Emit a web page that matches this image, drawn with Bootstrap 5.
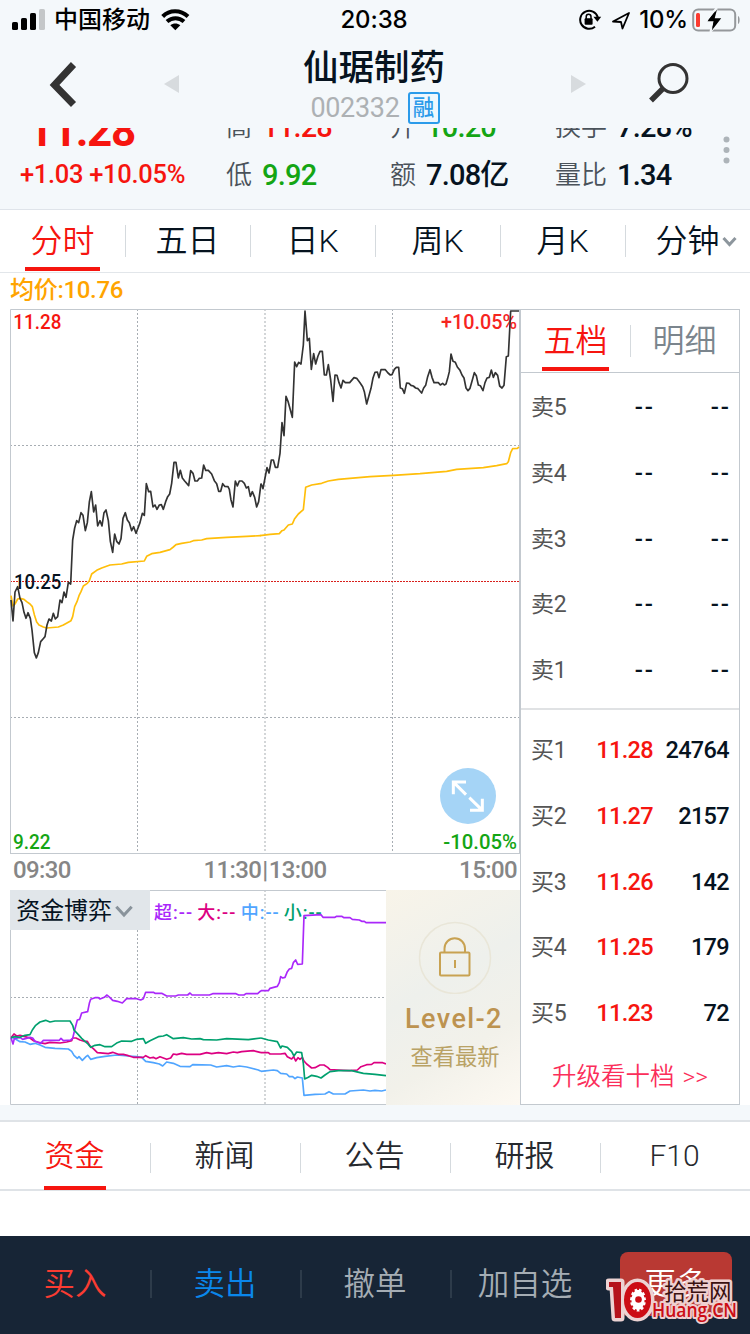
<!DOCTYPE html>
<html lang="zh-CN">
<head>
<meta charset="utf-8">
<meta name="viewport" content="width=750">
<title>仙琚制药 002332</title>
<link href="https://cdn.jsdelivr.net/npm/bootstrap@5.3.0/dist/css/bootstrap.min.css" rel="stylesheet">
<script src="https://cdn.jsdelivr.net/npm/bootstrap@5.3.0/dist/js/bootstrap.bundle.min.js"></script>
<style>
  :root { --up:#f6150f; --down:#14a514; --ink:#06131f; --rule:#c3c9cf; --pale:#f4f8fb; }
  body { width:750px; height:1334px; overflow:hidden; background:#fff; color:var(--ink);
         font-family:Roboto,"Noto Sans CJK SC",sans-serif; line-height:1; }
  svg { display:block; flex:none; }
  .up { color:var(--up); } .down { color:var(--down); }
  .statusbar { height:40px; padding:0 10px 0 12px; font:500 24px/40px Inter,"Noto Sans CJK SC",sans-serif; color:#000; }
  .clock { left:0; right:2px; top:0; text-align:center; letter-spacing:-.1px; }
  .titlebar { height:88px; display:grid; grid-template-columns:126px 91px 1fr 91px 126px; align-items:center; }
  .stock-name { font-size:35.5px; font-weight:500; line-height:40px; margin:4px 2px 0 0; }
  .stock-code { font-size:27px; line-height:32px; color:#adb1b4; letter-spacing:-.3px; }
  .rong { width:32px; height:32px; border:2px solid #2b9bea; border-radius:3px; color:#2b9bea; font-size:21.5px; font-weight:500; line-height:27px; text-align:center; background:#eef7fd; }
  .quotes { height:82px; border-bottom:1px solid #dfe4ea; }
  .quote-grid { margin-top:-25px; display:grid; grid-template-columns:206px 164px 165px 1fr; padding-left:20px; }
  .quote-row { display:flex; align-items:center; height:48px; line-height:48px; }
  .last-price { font-size:44px; font-weight:700; padding-left:8px; height:48px; line-height:56px; letter-spacing:-1.4px; }
  .change { font-size:25.5px; font-weight:500; line-height:46px; letter-spacing:-.3px; }
  .lbl { font-size:26px; font-weight:350; color:#4a525a; margin-right:10px; }
  .val { font-size:29px; font-weight:500; letter-spacing:-.8px; }
  .more-dots { right:20px; top:7px; }
  .period { height:63px; border-bottom:1px solid #e2e6ea; }
  .period > div, .infotabs > div, .trade > div { position:relative; width:20%; display:flex; justify-content:center; align-items:center; }
  .period > div { width:125px; font-size:32px; font-weight:350; line-height:62px; }
  .period > div + div::before, .infotabs > div + div::before, .trade > div + div::before { content:""; position:absolute; left:0; top:15px; width:1px; height:32px; background:#d5dade; }
  .picked::after { content:""; position:absolute; bottom:1px; width:75px; height:4px; background:var(--up); }
  .period .picked { color:var(--up); }
  .avgline { height:36px; padding-left:10px; font-size:24px; font-weight:500; line-height:35px; letter-spacing:-.3px; color:#ffa400; }
  .board { padding:0 10px; height:796px; }
  .leftside { width:510px; }
  .times { height:36px; line-height:33px; font-size:24px; font-weight:500; letter-spacing:-.6px; color:#868686; padding:0 3px; }
  .level2 { width:134px; height:215px; background:linear-gradient(150deg,#f8f4e9 0%,#eef0ec 42%,#f2f1ea 70%,#fdf9f2 100%); }
  .lv-title { font-size:27px; font-weight:500; letter-spacing:1.4px; color:#bd9350; line-height:32px; margin-top:9px; padding-left:2px; }
  .lv-sub { font-size:22.3px; color:#b9a265; line-height:30px; margin-top:7px; padding-left:4px; }
  .book { width:220px; border:1px solid var(--rule); }
  .booktabs { height:63px; border-bottom:1px solid var(--rule); font-size:32px; font-weight:350; line-height:62px; }
  .booktabs > div { position:relative; flex:1; display:flex; justify-content:center; }
  .booktabs .picked::after { width:67px; bottom:1px; }
  .booktabs > div + div { color:#7b858d; }
  .booktabs > div + div::before { content:""; position:absolute; left:0; top:15px; width:1px; height:32px; background:#d5dade; }
  .lvl { display:grid; grid-template-columns:50px 72px 1fr; height:65.75px; line-height:67px; padding:0 10px; font-size:23.5px; font-weight:500; letter-spacing:-.65px; text-align:right; }
  .lvl > :first-child { text-align:left; color:#555; font-weight:400; font-size:23px; letter-spacing:-.3px; }
  .sells .lvl > :not(:first-child) { letter-spacing:2px; margin-right:-2px; font-size:24px; }
  .sells { padding-top:1px; height:337px; border-bottom:2px solid #e0e2e4; }
  .buys { padding-top:7px; }
  .upgrade { color:#fb2e5a; font-size:24.500px; font-weight:350; line-height:62px; text-align:center; word-spacing:2px; }
  .strip { height:17px; background:var(--pale); border-bottom:2px solid #dfe3e7; }
  .infotabs { height:69px; border-bottom:2px solid #dfe3e7; font-size:30px; font-weight:350; color:#26292e; line-height:69px; }
  .infotabs > div { height:67px; padding-right:1px; }
  .infotabs > div + div::before { top:21px; height:30px; }
  .infotabs .picked { color:var(--up); }
  .infotabs .picked::after { width:62px; bottom:-1px; }
  .trade { height:98px; margin-top:45px; background:#172536; color:#a5adb4; font-size:31.5px; font-weight:350; }
  .trade > div { height:98px; }
  .trade > div + div::before { top:34px; width:2px; height:28px; background:#2d3b4a; }
  .trade > div:nth-child(5)::before { display:none; }
  .morebtn { width:112px; height:64px; margin:0 -2px 2px 0; border-radius:8px; background:#b93933; color:#fff; line-height:65px; text-align:center; }
  .stamp { right:8px; bottom:4px; }
</style>
</head>
<body>
<header style="background:var(--pale)">
  <div class="statusbar position-relative d-flex align-items-center">
    <svg width="34" height="22" viewBox="0 0 34 22"><g><rect x="0" y="13" width="6" height="8" rx="1.6"/><rect x="9" y="9" width="6" height="12" rx="1.6"/><rect x="18" y="4" width="6" height="17" rx="1.6"/><rect x="27" y="0" width="6" height="21" rx="1.6" fill="#c4c7c9"/></g></svg>
    <span class="ms-2">中国移动</span>
    <svg class="ms-2" width="36" height="22" viewBox="0 0 33 22"><g fill="none" stroke="#000" stroke-width="4"><path d="M3.200 7.500C10 .5 21 .5 28.500 7.500"/><path d="M7.500 12.600c5-4.500 12-4.500 17 0"/></g><path d="M10.800 16.200c3-2.400 7-2.400 10 0l-5 5z"/></svg>
    <span class="clock position-absolute">20:38</span>
    <div class="ms-auto d-flex align-items-center">
      <svg width="24" height="22" viewBox="0 0 24 22"><path d="M19.8 8.2A9 9 0 1 0 17 17.7" fill="none" stroke="#000" stroke-width="2"/><path d="M15.4 7.8h7.8l-3.8 5z"/><rect x="6.6" y="9.3" width="8" height="6.4" rx="1"/><path d="M8.2 10V7.7a2.4 2.4 0 0 1 4.8 0V10" fill="none" stroke="#000" stroke-width="1.5"/></svg>
      <svg class="ms-2" width="21" height="21" viewBox="0 0 21 21"><path d="M3 11.500 19 3 12.500 18.500 11 12z" fill="none" stroke="#000" stroke-width="1.8" stroke-linejoin="round"/></svg>
      <span style="margin:0 4px 0 8px;letter-spacing:-.2px">10%</span>
      <svg width="48" height="24" viewBox="0 0 48 24"><rect x="1.2" y="1.5" width="42" height="21" rx="5" fill="none" stroke="#95989b" stroke-width="2"/><path d="M46 8c2.200 1 2.200 7 0 8z" fill="#95989b"/><rect x="4" y="5" width="4" height="14" rx="1.5" fill="#fb3b30"/><path d="M24.500 0 14 13.500h6.500L18.500 24 30 10h-7z" stroke="#f4f8fb" stroke-width="2"/><path d="M25 1.500 15.500 13.200h6.500L19.800 22.500 29.200 10.200h-6.500z"/></svg>
    </div>
  </div>
  <div class="titlebar">
    <svg class="mx-auto" width="28" height="46" viewBox="0 0 28 46"><path d="M24.500 3.500 5.500 24l19 19.500" fill="none" stroke="#333" stroke-width="7"/></svg>
    <svg class="mx-auto" width="15" height="18" viewBox="0 0 15 18"><path d="M15 0v18L0 9z" fill="#d7dbde"/></svg>
    <div class="d-flex flex-column align-items-center">
      <div class="stock-name">仙琚制药</div>
      <div class="d-flex align-items-center gap-2 mt-1"><span class="stock-code">002332</span><span class="rong">融</span></div>
    </div>
    <svg class="mx-auto" width="15" height="18" viewBox="0 0 15 18"><path d="M0 0v18l15-9z" fill="#d7dbde"/></svg>
    <svg style="margin-left:25px" width="42" height="44" viewBox="0 0 42 44"><circle cx="24" cy="16.500" r="14" fill="none" stroke="#333" stroke-width="3"/><path d="m15 25.500-13 13" stroke="#333" stroke-width="5.500"/></svg>
  </div>
  <div class="quotes overflow-hidden position-relative">
    <div class="quote-grid text-nowrap">
      <div class="up"><div class="last-price">11.28</div><div class="change">+1.03 +10.05%</div></div>
      <div><div class="quote-row"><span class="lbl">高</span><span class="val up">11.28</span></div><div class="quote-row"><span class="lbl">低</span><span class="val down">9.92</span></div></div>
      <div><div class="quote-row"><span class="lbl">开</span><span class="val down">10.20</span></div><div class="quote-row"><span class="lbl">额</span><span class="val">7.08亿</span></div></div>
      <div><div class="quote-row"><span class="lbl">换手</span><span class="val">7.28%</span></div><div class="quote-row"><span class="lbl">量比</span><span class="val">1.34</span></div></div>
    </div>
    <svg class="more-dots position-absolute" width="7" height="32" viewBox="0 0 7 32" fill="#adb4b9"><circle cx="3.500" cy="4.500" r="3"/><circle cx="3.500" cy="15" r="3"/><circle cx="3.500" cy="25.500" r="3"/></svg>
  </div>
</header>

<nav class="period d-flex">
  <div class="picked">分时</div><div>五日</div><div>日K</div><div>周K</div><div>月K</div>
  <div style="padding-left:17px">分钟<svg style="margin-left:2px" width="15" height="11" viewBox="0 0 15 11"><path d="m1.500 2 6 6.500 6-6.500" fill="none" stroke="#8d969d" stroke-width="3"/></svg></div>
</nav>
<div class="avgline">均价:10.76</div>

<main class="board d-flex">
  <section class="leftside">
    <svg width="510" height="545" viewBox="30 27 1530 1635">
      <g fill="none">
        <g stroke="#a7adb3" stroke-width="3" stroke-dasharray="6 6"><path d="M412.500 27V1662M1177.500 27V1662M30 436.500H1560M30 1252.500H1560"/></g>
        <path d="M795 27V1662" stroke="#d3d6d8" stroke-width="6" stroke-dasharray="6 6"/>
        <path d="M30 844.500H1560" stroke="#d8201c" stroke-width="3" stroke-dasharray="6 3"/>
        <path d="M31.500 1662V28.500H1560M30 1660.500H1560" stroke="#c3c9cf" stroke-width="3"/>
        <path d="M1558.500 27V1662" stroke="#c3c9cf" stroke-width="3"/>
      </g>
      <g font-family="Roboto" font-weight="500" font-size="60">
        <text x="40" y="88" fill="#f6150f" textLength="144" lengthAdjust="spacingAndGlyphs">11.28</text>
        <text x="1323" y="88" fill="#f6251f" textLength="228" lengthAdjust="spacingAndGlyphs">+10.05%</text>
        <text x="42" y="867" fill="#06131f" textLength="142" lengthAdjust="spacingAndGlyphs">10.25</text>
        <text x="39" y="1648" fill="#14a514" textLength="113" lengthAdjust="spacingAndGlyphs">9.22</text>
        <text x="1330" y="1648" fill="#14a514" textLength="221" lengthAdjust="spacingAndGlyphs">-10.05%</text>
      </g>
      <g fill="none" stroke-width="5" stroke-linejoin="round">
        <g stroke="#ffbe0a">
          <polyline points="33,887 39,918 45,912 53,897 60,895 72,898 80,905 90,912 97,920 103,944 110,966 117,975 130,981 140,984 175,981 190,975 213,962 218,950 224,920 231,905 237,887 243,875 250,858 262,850 268,842 275,822 290,811 305,804 330,795 365,792 385,787 433,783 440,769 455,761 480,757 510,749 520,741 528,734 545,730 570,726 580,722 605,720 620,716 680,712 740,709 782,707"/>
          <polyline transform="translate(780 0)" points="0,707 30,703 58,701 66,692 72,690 85,675 97,672 104,656 115,642 130,629 133,600 137,562 155,555 185,550 205,543 235,538 330,530 400,526 480,521 560,514 590,508 670,503 710,497 740,491 745,485 752,458 758,446 772,445 777,441"/>
        </g>
        <g stroke="#333">
          <polyline points="33,900 39,963 45,876 53,860 60,895 66,908 72,937 78,955 84,938 91,955 96,990 103,1058 109,1074 115,1058 122,1025 129,1017 135,1010 141,975 147,957 154,963 160,940 166,957 173,950 180,900 186,908 192,876 198,892 205,847 212,852 218,720 224,684 230,662 236,668 243,638 249,646 256,692 262,668 268,606 274,575 281,636 287,615 293,678 300,662 306,678 312,638 318,630 325,662 331,724 338,757 344,702 350,724 357,732 363,716 369,655 376,638 382,660 388,668 395,692 401,680 408,700 414,684 420,668 427,640 433,646 439,551 446,575 452,574 459,621 465,615 471,628 478,615 484,614 490,628 497,605 503,590 509,582 515,550 522,487 528,487 535,534 541,511 547,534 554,543 566,557 572,512 579,520 585,543 592,543 598,535 605,534 611,495 617,511 625,511 635,522 643,542 650,551 656,574 662,574 668,551 674,559 684,560 688,568 693,600 699,621 706,543 712,558 718,543 726,543 733,550 739,564 745,560 751,589 757,575 764,592 770,621 776,605 783,551"/>
          <polyline transform="translate(780 0)" points="3,551 9,566 15,534 21,503 27,519 34,480 40,480 46,502 53,502 60,460 66,368 72,407 78,289 84,304 97,352 104,186 110,200 116,187 123,192 130,135 135,33 142,122 148,115 154,208 161,161 167,192 174,168 180,154 187,154 193,225 199,225 205,194 212,240 219,304 225,225 231,226 237,248 243,264 249,241 256,248 269,248 282,233 290,235 300,248 308,260 313,275 320,312 326,290 333,265 339,234 345,217 352,216 357,233 363,209 376,209 384,219 391,225 396,224 403,208 409,202 416,202 421,264 427,266 433,280 440,249 447,250 453,256 460,258 467,264 474,266 485,279 491,264 497,256 503,230 510,209 516,232 522,248 535,248 541,255 548,250 553,255 558,252 563,235 568,215 573,162 579,184 586,187 592,201 600,211 606,225 612,234 618,264 624,272 630,265 637,240 643,218 649,227 655,255 661,257 669,272 675,248 681,234 688,232 694,210 700,232 706,218 713,226 719,258 726,264 732,256 739,170 745,168 752,33 777,33"/>
        </g>
      </g>
      <g transform="translate(780 1320)"><circle cx="624" cy="168" r="84" fill="#a5d4f6"/><g fill="none" stroke="#fff" stroke-width="9"><path d="M580 163V126H618M584 130 618 164M630 211H667V176M628 173 664 208"/></g></g>
    </svg>
    <div class="times d-flex justify-content-between position-relative"><span>09:30</span><span>11:30<span style="margin:0 1px">|</span>13:00</span><span>15:00</span></div>
    <div class="d-flex">
      <svg width="376" height="215" viewBox="30 180 1128 645">
        <g fill="none">
          <path d="M412.500 180V825M30 502.500H1158" stroke="#a7adb3" stroke-width="3" stroke-dasharray="6 6"/>
          <path d="M795 180V825" stroke="#d3d6d8" stroke-width="6" stroke-dasharray="6 6"/>
          <path d="M1158 181.500H31.500V823.500H1158" stroke="#c3c9cf" stroke-width="3"/>
        </g>
        <rect x="30" y="180" width="420" height="120" fill="#e1e6ea"/>
        <text x="49" y="266" font-family="Noto Sans CJK SC" font-size="72" font-weight="400" fill="#06131f" textLength="287">资金博弈</text>
        <path d="m349 230 23 25 23-25" fill="none" stroke="#89939b" stroke-width="9"/>
        <g font-family="Roboto, Noto Sans CJK SC" font-size="54" font-weight="500">
          <text x="462" y="266" fill="#aa28fa" textLength="114">超:--</text><text x="592" y="266" fill="#dc0082" textLength="114">大:--</text><text x="722" y="266" fill="#50a5ff" textLength="114">中:--</text><text x="851" y="266" fill="#00a06e" textLength="114">小:--</text>
        </g>
        <g fill="none" stroke-width="5" stroke-linejoin="round">
          <g stroke="#50a5ff"><polyline points="33,620 45,626 60,635 75,636 90,643 105,640 120,645 135,652 165,655 205,657 215,664 222,676 232,685 237,680 247,691 258,680 263,676 272,688 290,683 315,679 350,675 385,678 410,680 425,682 437,694 460,698 478,702 488,708 500,696 520,700 540,709 570,710 578,704 632,705 650,711 680,707 700,711 718,708 740,711 775,720 783,724"/><polyline transform="translate(780 -270)" points="3,994 40,990 52,992 62,1000 80,1002 88,1010 98,1010 105,1016 112,1011 127,1014 132,1066 165,1063 195,1062 207,1055 220,1062 255,1062 270,1053 310,1050 330,1053 345,1051 365,1053 378,1050"/></g>
          <g stroke="#dc0082"><polyline points="33,623 42,612 50,618 60,616 75,620 90,624 100,632 115,637 135,641 150,637 180,639 200,636 215,632 218,624 228,624 240,630 252,634 262,634 270,648 280,656 292,668 325,671 338,667 355,673 370,673 385,677 400,682 430,682 437,677 450,684 460,682 468,686 480,680 490,684 500,688 512,684 520,672 530,674 545,670 560,673 600,673 620,668 635,671 655,668 680,671 700,666 712,668 725,665 760,662 783,668"/><polyline transform="translate(780 -270)" points="3,938 25,938 30,942 62,942 75,940 82,950 95,957 101,950 107,963 114,953 120,958 127,952 132,963 140,972 155,984 165,983 180,975 192,975 203,982 210,989 235,990 250,991 270,992 292,990 303,980 320,974 335,973 342,968 368,968 378,972"/></g>
          <g stroke="#aa28fa"><polyline points="33,623 39,642 43,626 60,622 68,628 90,622 98,624 105,634 122,640 130,631 178,631 183,625 190,632 212,630 218,625 224,600 232,570 239,568 245,549 263,545 268,520 272,508 285,503 295,503 300,507 313,502 321,495 330,503 338,511 352,514 367,519 380,506 410,506 422,510 430,506 437,487 460,487 465,490 485,490 500,498 527,498 535,495 563,495 570,489 576,495 628,495 638,491 708,491 716,495 732,495 738,491 773,491 783,482"/><polyline transform="translate(780 -270)" points="3,752 25,752 30,745 52,739 58,728 62,710 68,714 75,712 82,695 88,687 95,685 100,668 107,660 113,673 127,672 132,527 183,524 189,532 225,532 230,529 245,529 252,533 270,533 277,538 298,540 305,544 313,544 318,548 378,548"/></g>
          <g stroke="#00a06e"><polyline points="33,623 45,620 60,622 75,616 90,614 97,600 107,586 120,576 137,571 150,576 165,573 210,573 218,586 222,600 235,614 245,625 262,640 272,652 285,646 300,644 315,650 335,650 352,638 365,633 395,634 410,628 430,626 437,640 450,632 475,620 490,618 500,614 520,626 550,623 575,627 600,626 610,629 650,630 680,626 745,629 783,624"/><polyline transform="translate(780 -270)" points="3,894 25,900 52,905 62,924 66,918 82,922 95,935 102,948 110,936 125,938 130,970 134,1017 145,1012 155,1006 170,1009 183,1014 195,1005 210,995 235,992 275,992 310,1000 345,1003 378,1007"/></g>
        </g>
      </svg>
      <div class="level2 text-center">
        <svg style="margin:30px 0 0 32px" width="74" height="74" viewBox="0 0 74 74" fill="none"><circle cx="37" cy="38" r="35.500" stroke="#e9e6d8" stroke-width="1.500"/><g stroke="#c8a252" stroke-width="2"><rect x="22" y="32.500" width="29.500" height="23" rx="1"/><path d="M26.500 32v-3.500a10.200 10.200 0 0 1 20.500 0V32M37 40v8"/></g></svg>
        <div class="lv-title">Level-2</div>
        <div class="lv-sub">查看最新</div>
      </div>
    </div>
  </section>
  <aside class="book">
    <div class="booktabs d-flex"><div class="picked up">五档</div><div>明细</div></div>
    <div class="sells">
      <div class="lvl"><span>卖5</span><span>--</span><span>--</span></div>
      <div class="lvl"><span>卖4</span><span>--</span><span>--</span></div>
      <div class="lvl"><span>卖3</span><span>--</span><span>--</span></div>
      <div class="lvl"><span>卖2</span><span>--</span><span>--</span></div>
      <div class="lvl"><span>卖1</span><span>--</span><span>--</span></div>
    </div>
    <div class="buys">
      <div class="lvl"><span>买1</span><span class="up">11.28</span><span>24764</span></div>
      <div class="lvl"><span>买2</span><span class="up">11.27</span><span>2157</span></div>
      <div class="lvl"><span>买3</span><span class="up">11.26</span><span>142</span></div>
      <div class="lvl"><span>买4</span><span class="up">11.25</span><span>179</span></div>
      <div class="lvl"><span>买5</span><span class="up">11.23</span><span>72</span></div>
    </div>
    <div class="upgrade">升级看十档 &gt;&gt;</div>
  </aside>
</main>

<div class="strip"></div>
<nav class="infotabs d-flex"><div class="picked">资金</div><div>新闻</div><div>公告</div><div>研报</div><div>F10</div></nav>
<footer class="trade d-flex position-relative">
  <div style="color:#fa3c32">买入</div><div style="color:#0a87eb">卖出</div><div>撤单</div><div>加自选</div><div><span class="morebtn">更多</span></div>
  <svg class="stamp position-absolute" width="136" height="58" viewBox="606 1276 136 58">
    <g stroke="#ecd3d3" stroke-width="7" stroke-linejoin="round">
      <path d="M609 1286h12v36h-6l-2-31h-4z" fill="#b5121b"/>
      <ellipse cx="637.500" cy="1304" rx="13.500" ry="18" fill="#cc0d15"/>
    </g>
    <g stroke="#efcfcf" stroke-linejoin="round" paint-order="stroke">
      <text x="664" y="1304" font-family="Noto Sans CJK SC" font-size="22.500" font-weight="400" fill="#3a1010" stroke-width="5">拾荒网</text>
      <text x="652" y="1321" font-family="Open Sans" font-size="19" font-weight="600" fill="#cc0d15" stroke-width="4" textLength="85" lengthAdjust="spacingAndGlyphs">Huang.CN</text>
    </g>
    <path d="M609 1286h12v36h-6l-2-31h-4z" fill="#b5121b"/><ellipse cx="637.500" cy="1304" rx="13.500" ry="18" fill="#cc0d15"/>
    <ellipse cx="638" cy="1304" rx="8" ry="11.500" fill="#fff"/><ellipse cx="638" cy="1304" rx="8.500" ry="12" fill="none" stroke="#cc0d15" stroke-width="4" stroke-dasharray="2.500 3.400"/><circle cx="638.500" cy="1303.500" r="3.300" fill="#cc0d15"/>
  </svg>
</footer>
</body>
</html>
